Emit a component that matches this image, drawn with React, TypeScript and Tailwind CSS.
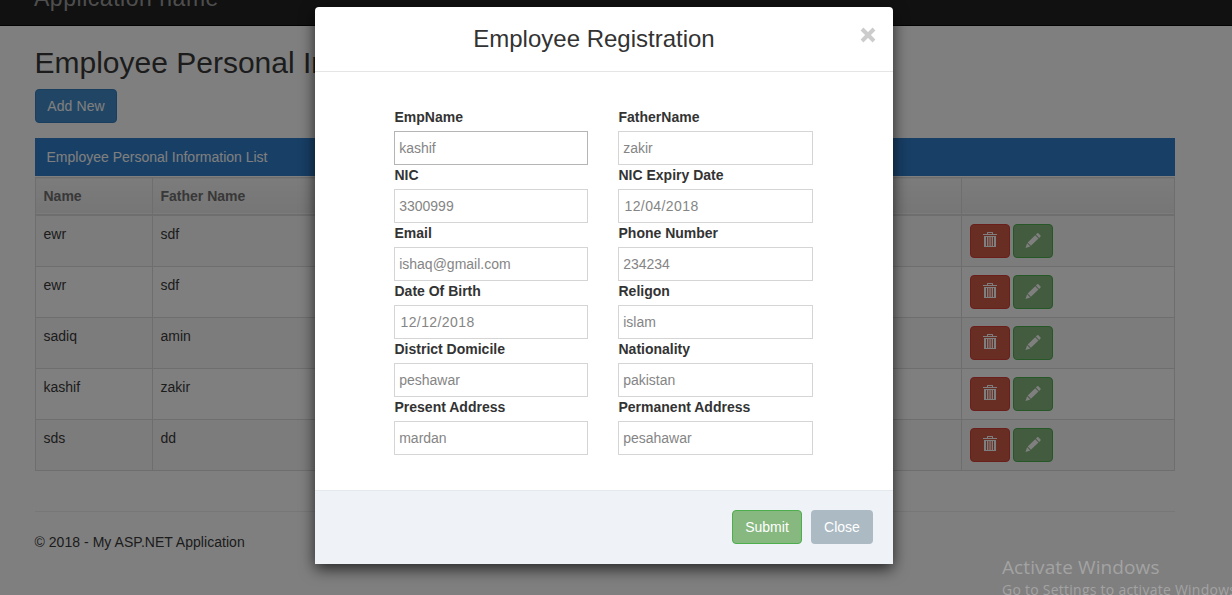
import React from "react";

const employees = [
  { name: "ewr", father: "sdf" },
  { name: "ewr", father: "sdf" },
  { name: "sadiq", father: "amin" },
  { name: "kashif", father: "zakir" },
  { name: "sds", father: "dd" },
];

const fields = [
  { label: "EmpName", value: "kashif", hovered: true },
  { label: "FatherName", value: "zakir" },
  { label: "NIC", value: "3300999" },
  { label: "NIC Expiry Date", value: "12/04/2018", date: true },
  { label: "Email", value: "ishaq@gmail.com" },
  { label: "Phone Number", value: "234234" },
  { label: "Date Of Birth", value: "12/12/2018", date: true },
  { label: "Religon", value: "islam" },
  { label: "District Domicile", value: "peshawar" },
  { label: "Nationality", value: "pakistan" },
  { label: "Present Address", value: "mardan" },
  { label: "Permanent Address", value: "pesahawar" },
];

function TrashIcon() {
  return (
    <svg width="14" height="16" viewBox="0 0 14 16" fill="white" aria-hidden="true">
      <path d="M4 3V1.500q0-.5.500-.5h5q.5 0 .5.500V3h4v1H0V3zM5 3h4V2H5z" fillRule="evenodd" />
      <path d="M1 5h12v10.500q0 .5-.5.500h-11q-.5 0-.5-.5zM3 6v9h1V6zM5.400 6v9h1V6zM7.700 6v9h1V6zM10 6v9h1V6z" fillRule="evenodd" />
    </svg>
  );
}

function PencilIcon() {
  return (
    <svg width="16" height="15" viewBox="0 0 16 15" fill="white" aria-hidden="true">
      <path d="M12.200.300q.6-.5 1.200 0l2.100 2.100q.5.600 0 1.200L14.200 4.900 10.900 1.600zM10.200 2.300l3.300 3.300-7.600 7.100-3.200-3.200zM2.100 10.200l3.200 3.200L.5 15z" />
    </svg>
  );
}

function Page() {
  return (
    <div className="h-full bg-white text-[#393939]">
      <nav className="h-[26px] overflow-hidden border-b border-[#080808] bg-[#222] px-[34px]">
        <div className="-mt-[18px] text-[23px] leading-[32px] tracking-[0.53px] text-[#9d9d9d]">Application name</div>
      </nav>
      <main className="pr-[57px] pl-[35px]">
        <h2 className="-ml-[0.5px] pt-5 text-[30px] leading-[33px] whitespace-nowrap">
          Employee Personal Information
        </h2>
        <button className="mt-[10px] block h-[34px] w-[82px] rounded-[4px] border border-[#357ebd] bg-[#428bca] text-sm tracking-[0.1px] text-white">
          Add New
        </button>
        <div className="mt-[15px] h-[38px] bg-[#307ecc] pl-[11.5px] text-sm leading-[38px] text-white">
          Employee Personal Information List
        </div>
        <table className="mt-px w-full table-fixed border-collapse text-sm leading-5">
          <colgroup>
            <col className="w-[117px]" />
            <col />
            <col className="w-[213px]" />
          </colgroup>
          <thead>
            <tr className="h-[37px] border border-b-2 border-[#ddd] bg-linear-to-b from-[#f8f8f8] to-[#ececec] text-left text-[#707070]">
              <th className="border-r border-[#ddd] px-[7.5px] py-0 font-bold">Name</th>
              <th className="border-r border-[#ddd] px-[7.5px] py-0 font-bold">Father Name</th>
              <th />
            </tr>
          </thead>
          <tbody>
            {employees.map((e, i) => (
              <tr key={i} className="h-[51px] border border-[#ddd] first:h-[52px] odd:bg-[#f9f9f9]">
                <td className="border-r border-[#ddd] px-[7.5px] pt-2 align-top">{e.name}</td>
                <td className="border-r border-[#ddd] px-[7.5px] pt-2 align-top">{e.father}</td>
                <td className="px-2 py-0">
                  <div className="flex gap-[3px]">
                    <button className="flex h-[34px] w-10 items-start justify-center rounded-[4px] border border-[#d43f3a] bg-[#d15b47] pt-[6px]">
                      <TrashIcon />
                    </button>
                    <button className="flex h-[34px] w-10 items-start justify-center rounded-[4px] border border-[#4cae4c] bg-[#87b87f] pt-2">
                      <PencilIcon />
                    </button>
                  </div>
                </td>
              </tr>
            ))}
          </tbody>
        </table>
        <hr className="mt-10 border-[#eee]" />
        <footer className="-ml-[0.5px] mt-5 text-sm leading-5 tracking-[0.04px]">© 2018 - My ASP.NET Application</footer>
      </main>
    </div>
  );
}

function RegistrationDialog() {
  return (
    <section
      role="dialog"
      className="absolute top-[7px] left-[315px] flex h-[557px] w-[578px] flex-col overflow-hidden rounded-t-[4px] bg-white text-sm text-[#333] shadow-[0_5px_15px_rgba(0,0,0,0.7)]"
    >
      <header className="flex h-[65px] shrink-0 border-b border-[#e5e5e5] pr-4 pl-4">
        <h4 className="flex-1 pt-[15px] pr-[2px] text-center text-2xl leading-[34px]">Employee Registration</h4>
        <button className="mt-[20px] flex h-4 w-[18px] items-center justify-center" aria-label="Close">
          <svg width="16" height="16" viewBox="0 0 16 16" aria-hidden="true">
            <path d="M2 2l12 12M14 2L2 14" stroke="#ccc" strokeWidth="4" />
          </svg>
        </button>
      </header>
      <div className="grid flex-1 content-start grid-cols-[194px_195px] gap-x-[30px] px-[79px] pt-[35px]">
        {fields.map((f) => (
          <label key={f.label} className="flex h-[58px] flex-col">
            <span className="h-6 pl-[0.5px] leading-5 font-bold">{f.label}</span>
            <input
              readOnly
              value={f.value}
              className={`h-[34px] w-full border bg-white text-sm text-[#858585] outline-none ${
                f.hovered ? "border-[#b5b5b5]" : "border-[#d5d5d5]"
              } ${f.date ? "pl-[5.5px] tracking-[0.400px]" : "pl-[4.2px]"}`}
            />
          </label>
        ))}
      </div>
      <footer className="flex h-[74px] shrink-0 justify-end gap-[9px] border-t border-[#e4e9ee] bg-[#eff3f8] px-5 pt-[19px] text-white [text-shadow:0_-1px_0_rgba(0,0,0,0.25)]">
        <button className="h-[34px] w-[70px] rounded-[4px] border border-[#4cae4c] bg-[#87b87f]">Submit</button>
        <button className="h-[34px] w-[62px] rounded-[4px] bg-[#abbac3]">Close</button>
      </footer>
    </section>
  );
}

export default function App() {
  return (
    <div className="relative h-[595px] w-[1232px] overflow-hidden font-['Liberation_Sans',Arial,sans-serif]">
      <Page />
      <div className="absolute inset-0 bg-black/50" />
      <RegistrationDialog />
      <div className="absolute top-[555px] left-[1002px] font-['Open_Sans','Noto_Sans',sans-serif] whitespace-nowrap text-[#a3a3a3]">
        <div className="text-[19px] leading-6 tracking-[0.1px]">Activate Windows</div>
        <div className="text-sm leading-[22px] tracking-[0.25px]">Go to Settings to activate Windows.</div>
      </div>
    </div>
  );
}
